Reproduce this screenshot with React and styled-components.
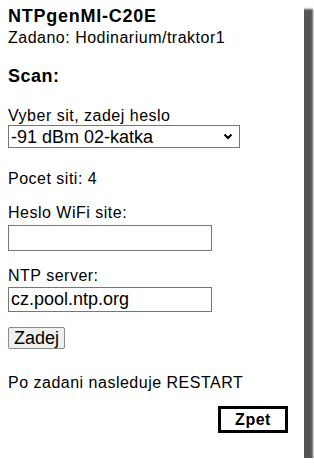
import React from "react";
import styled, { createGlobalStyle } from "styled-components";

const GlobalStyle = createGlobalStyle`
  html, body {
    margin: 0;
    padding: 0;
    background: #ffffff;
  }
  body {
    font-family: "Liberation Sans", Arial, sans-serif;
    color: #000;
  }
`;

const Frame = styled.div`
  width: 304px;
  height: 458px;
  box-sizing: border-box;
  background: #fff;
  box-shadow: 9px 9px 2px #555555;
  padding: 6px 0 0 8px;
  display: flex;
  flex-direction: column;
  align-items: flex-start;
`;

const Title = styled.div`
  font-size: 18px;
  line-height: 21px;
  font-weight: 700;
  letter-spacing: 0.75px;
`;

const Line = styled.div`
  font-size: 16px;
  line-height: 18px;
  letter-spacing: 0.5px;
  margin-top: ${p => p.$top || 0}px;
`;

const Section = styled.div`
  font-size: 18px;
  line-height: 21px;
  font-weight: 700;
  letter-spacing: 0.5px;
  margin-top: ${p => p.$top || 0}px;
`;

const SelectWrap = styled.div`
  position: relative;
  width: 232px;
  height: 23px;
`;

const Select = styled.select`
  appearance: none;
  width: 100%;
  height: 100%;
  box-sizing: border-box;
  border: 1px solid #767676;
  border-radius: 0;
  background: #fff;
  font-family: "Liberation Sans", Arial, sans-serif;
  font-size: 18px;
  padding: 0 0 0 2px;
  color: #000;
`;

const Chevron = styled.svg`
  position: absolute;
  right: 7px;
  top: 8px;
  pointer-events: none;
`;

const Input = styled.input`
  width: 204px;
  height: ${p => p.$h || 25}px;
  box-sizing: border-box;
  border: 1px solid #767676;
  border-radius: 0;
  padding: 0 0 0 2px;
  margin-top: ${p => p.$top || 0}px;
  font-family: "Liberation Sans", Arial, sans-serif;
  font-size: 18px;
  color: #000;
`;

const SubmitButton = styled.button`
  margin-top: 15px;
  height: 22px;
  width: 57px;
  padding: 0;
  box-sizing: border-box;
  background: #efefef;
  border: 1px solid #8a8a8a;
  border-radius: 2px;
  font-family: "Liberation Sans", Arial, sans-serif;
  font-size: 18px;
  line-height: 18px;
  color: #000;
`;

const BackRow = styled.div`
  align-self: stretch;
  display: flex;
  justify-content: flex-end;
  padding-right: 16px;
  margin-top: 14px;
`;

const BackButton = styled.button`
  width: 70px;
  height: 27px;
  box-sizing: border-box;
  background: #fff;
  border: 3px solid #000;
  border-radius: 0;
  padding: 0;
  font-family: "Liberation Sans", Arial, sans-serif;
  font-size: 16px;
  font-weight: 700;
  letter-spacing: 0.5px;
  color: #000;
`;

export default function App() {
  return (
    <>
      <GlobalStyle />
      <Frame>
        <Title>NTPgenMI-C20E</Title>
        <Line $top={2}>Zadano: Hodinarium/traktor1</Line>
        <Section $top={19}>Scan:</Section>
        <Line $top={20}>Vyber sit, zadej heslo</Line>
        <SelectWrap>
          <Select defaultValue="02-katka">
            <option value="02-katka">-91 dBm 02-katka</option>
          </Select>
          <Chevron width="10" height="7" viewBox="0 0 10 7">
            <polyline points="1.5,1.5 5,5 8.5,1.5" fill="none" stroke="#000" strokeWidth="2" />
          </Chevron>
        </SelectWrap>
        <Line $top={22}>Pocet siti: 4</Line>
        <Line $top={16}>Heslo WiFi site:</Line>
        <Input type="text" $top={3} $h={26} />
        <Line $top={16}>NTP server:</Line>
        <Input type="text" $top={2} defaultValue="cz.pool.ntp.org" />
        <SubmitButton>Zadej</SubmitButton>
        <Line $top={25}>Po zadani nasleduje RESTART</Line>
        <BackRow>
          <BackButton>Zpet</BackButton>
        </BackRow>
      </Frame>
    </>
  );
}
